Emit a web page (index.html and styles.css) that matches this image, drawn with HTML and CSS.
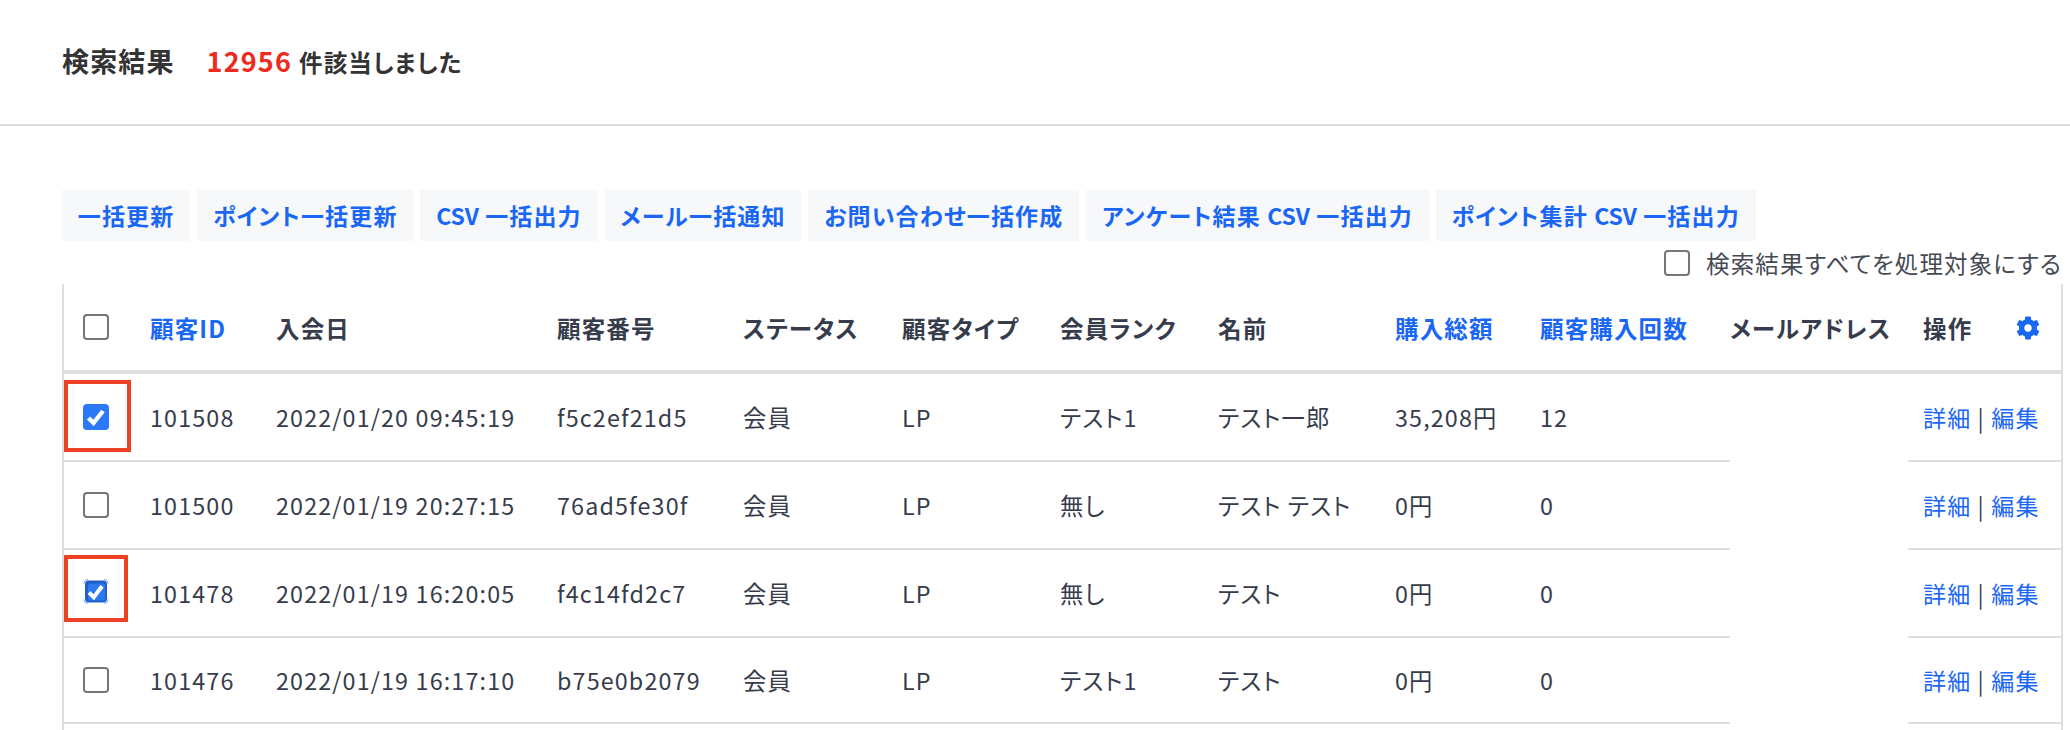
FILE: index.html
```html
<!DOCTYPE html>
<html lang="ja">
<head>
<meta charset="utf-8">
<title>検索結果</title>
<link rel="stylesheet" href="styles.css">
</head>
<body>
<header class="result-head">
  <h1 class="result-title">検索結果</h1>
  <span class="result-count">12956</span>
  <span class="result-note">件該当しました</span>
</header>
<main class="content">
  <div class="actions">
    <a class="btn">一括更新</a>
    <a class="btn">ポイント一括更新</a>
    <a class="btn"><span class="latin">CSV</span> 一括出力</a>
    <a class="btn">メール一括通知</a>
    <a class="btn">お問い合わせ一括作成</a>
    <a class="btn">アンケート結果 <span class="latin">CSV</span> 一括出力</a>
    <a class="btn">ポイント集計 <span class="latin">CSV</span> 一括出力</a>
  </div>
  <label class="select-all"><span class="box"></span>検索結果すべてを処理対象にする</label>
  <table class="grid">
    <colgroup>
      <col class="c1"><col class="c2"><col class="c3"><col class="c4"><col class="c5"><col class="c6"><col class="c7"><col class="c8"><col class="c9"><col class="c10"><col class="c11"><col class="c12">
    </colgroup>
    <thead>
      <tr>
        <th class="check"><span class="box"></span></th>
        <th class="link">顧客ID</th>
        <th>入会日</th>
        <th>顧客番号</th>
        <th>ステータス</th>
        <th>顧客タイプ</th>
        <th>会員ランク</th>
        <th>名前</th>
        <th class="link">購入総額</th>
        <th class="link">顧客購入回数</th>
        <th class="mail">メールアドレス</th>
        <th><div class="ops-head"><span>操作</span>
          <svg class="gear" viewBox="0 0 512 512"><path d="M487.400 315.700l-42.600-24.600c4.300-23.200 4.300-47 0-70.200l42.600-24.600c4.900-2.800 7.100-8.600 5.500-14-11.100-35.600-30-67.800-54.700-94.600-3.800-4.100-10-5.100-14.800-2.300L380.800 110c-17.900-15.400-38.500-27.300-60.800-35.100V25.800c0-5.600-3.900-10.500-9.400-11.700-36.700-8.200-74.300-7.800-109.200 0-5.500 1.200-9.400 6.100-9.400 11.700V75c-22.200 7.900-42.800 19.800-60.800 35.100L88.700 85.500c-4.900-2.800-11-1.900-14.800 2.300-24.700 26.700-43.600 58.900-54.700 94.600-1.700 5.400.6 11.200 5.500 14L67.300 221c-4.300 23.200-4.300 47 0 70.200l-42.600 24.600c-4.900 2.800-7.100 8.600-5.500 14 11.100 35.600 30 67.800 54.700 94.600 3.800 4.100 10 5.100 14.800 2.300l42.600-24.600c17.900 15.400 38.500 27.300 60.800 35.100v49.200c0 5.600 3.900 10.500 9.400 11.700 36.700 8.200 74.300 7.800 109.200 0 5.500-1.200 9.400-6.100 9.400-11.700v-49.200c22.200-7.900 42.800-19.800 60.800-35.100l42.600 24.600c4.900 2.800 11 1.900 14.800-2.300 24.700-26.700 43.600-58.900 54.700-94.600 1.500-5.500-.7-11.300-5.600-14.100zM256 336c-44.100 0-80-35.900-80-80s35.900-80 80-80 80 35.900 80 80-35.900 80-80 80z"/></svg>
        </div></th>
      </tr>
    </thead>
    <tbody>
      <tr>
        <td class="check"><span class="box checked"><svg viewBox="0 0 26 26"><path d="M5.500 14l5 5 9.500-12" /></svg></span><span class="mark mark-a"></span></td>
        <td>101508</td><td>2022/01/20 09:45:19</td><td>f5c2ef21d5</td><td>会員</td><td>LP</td><td>テスト1</td><td>テスト一郎</td><td>35,208円</td><td>12</td><td class="mail"></td>
        <td class="ops"><a>詳細</a> | <a>編集</a></td>
      </tr>
      <tr>
        <td class="check"><span class="box"></span></td>
        <td>101500</td><td>2022/01/19 20:27:15</td><td>76ad5fe30f</td><td>会員</td><td>LP</td><td>無し</td><td>テスト テスト</td><td>0円</td><td>0</td><td class="mail"></td>
        <td class="ops"><a>詳細</a> | <a>編集</a></td>
      </tr>
      <tr>
        <td class="check"><span class="box focusing"><svg viewBox="0 1.500 26 26"><path class="ring" d="M1 5a4 4 0 0 1 4-4M21 1a4 4 0 0 1 4 4M25 21a4 4 0 0 1-4 4M5 25a4 4 0 0 1-4-4"/><rect class="outer" x="2" y="2" width="22" height="22" rx="4"/><rect class="inner" x="5" y="5" width="17" height="17" rx="2"/><path class="tick" d="M6 14l4.800 4.800 8.200-11"/></svg></span><span class="mark mark-b"></span></td>
        <td>101478</td><td>2022/01/19 16:20:05</td><td>f4c14fd2c7</td><td>会員</td><td>LP</td><td>無し</td><td>テスト</td><td>0円</td><td>0</td><td class="mail"></td>
        <td class="ops"><a>詳細</a> | <a>編集</a></td>
      </tr>
      <tr class="row-short">
        <td class="check"><span class="box"></span></td>
        <td>101476</td><td>2022/01/19 16:17:10</td><td>b75e0b2079</td><td>会員</td><td>LP</td><td>テスト1</td><td>テスト</td><td>0円</td><td>0</td><td class="mail"></td>
        <td class="ops"><a>詳細</a> | <a>編集</a></td>
      </tr>
      <tr class="spill"><td colspan="12"></td></tr>
    </tbody>
  </table>
</main>
</body>
</html>
```
FILE: styles.css
```css
* { box-sizing: border-box; }
html, body { margin: 0; height: 730px; overflow: hidden; background: #fff; }
body {
  font-family: "Noto Sans CJK JP", "Noto Sans", sans-serif;
  font-size: 23px;
  letter-spacing: 0.05em;
  font-feature-settings: "palt";
  color: #363c4b;
}
.result-head {
  height: 126px;
  border-bottom: 2px solid #dedede;
  padding: 41px 0 0 62px;
  display: flex;
  align-items: baseline;
  color: #333;
}
.result-title { margin: 0 32px 0 0; font-size: 27px; font-weight: 700; line-height: 38px; }
.result-count { font-size: 27px; font-weight: 700; color: #ee2a1e; margin-right: 7px; }
.result-note { font-size: 23.500px; font-weight: 700; }
.content { padding: 64px 7px 0 62px; }
.actions { display: flex; gap: 7px; }
.btn {
  height: 51px;
  line-height: 50px;
  padding: 0 15.800px;
  background: #f7f8fa;
  color: #1a66f5;
  font-weight: 700;
  white-space: nowrap;
}
.latin { letter-spacing: -0.100px; }
.select-all {
  display: flex;
  align-items: center;
  justify-content: flex-end;
  height: 43px;
  padding-right: 1px;
  color: #454a52;
  font-size: 23.500px;
}
.select-all .box { margin-right: 16px; }
.box {
  display: block;
  width: 26px;
  height: 26px;
  border: 2px solid #767676;
  border-radius: 4px;
  background: #fff;
}
.box.checked { background: #2b78f8; border: 0; }
.box svg { display: block; width: 26px; height: 26px; overflow: visible; }
.box.checked path { fill: none; stroke: #fff; stroke-width: 4.400; }
.box.focusing { border: 0; background: none; }
.ring { fill: none; stroke: #74a5f5; stroke-width: 1; }
.outer { fill: #1f5fcb; }
.inner { fill: #2e78f0; }
.tick { fill: none; stroke: #fff; stroke-width: 4; }
.grid {
  table-layout: fixed;
  width: 2001px;
  border-collapse: separate;
  border-spacing: 0;
  border-left: 2px solid #dedede;
  border-right: 2px solid #dedede;
}
.c1 { width: 71px; }
.c2 { width: 126px; }
.c3 { width: 281px; }
.c4 { width: 186px; }
.c5 { width: 159px; }
.c6 { width: 158px; }
.c7 { width: 158px; }
.c8 { width: 177px; }
.c9 { width: 145px; }
.c10 { width: 205px; }
.c11 { width: 178px; }
.c12 { width: 153px; }
th, td {
  padding: 0 0 0 15px;
  text-align: left;
  vertical-align: middle;
  white-space: nowrap;
}
th {
  height: 90px;
  padding-top: 2px;
  border-bottom: 4px solid #dedede;
  font-size: 23.500px;
  font-weight: 700;
}
td {
  height: 88px;
  padding-bottom: 1px;
  border-bottom: 2px solid #dedede;
  font-size: 23.300px;
}
th.check, td.check { padding: 0 0 0 19px; position: relative; }
th.link { color: #1a66f5; }
th.mail, td.mail { padding-left: 0; }
td.mail { border-bottom: 0; }
td.ops { font-size: 23px; }
.ops a { color: #1a66f5; }
.ops-head { display: flex; justify-content: space-between; align-items: center; padding-right: 21px; }
.gear { width: 24px; height: 24px; fill: #1a66f5; display: block; }
.mark { position: absolute; border: 4px solid #ee4023; left: 0; }
.mark-a { top: 6px; width: 67px; height: 72px; }
.mark-b { top: 5px; width: 64px; height: 67px; }
.row-short td { height: 86px; }
.spill td { height: 6px; padding: 0; border: 0; }
```
